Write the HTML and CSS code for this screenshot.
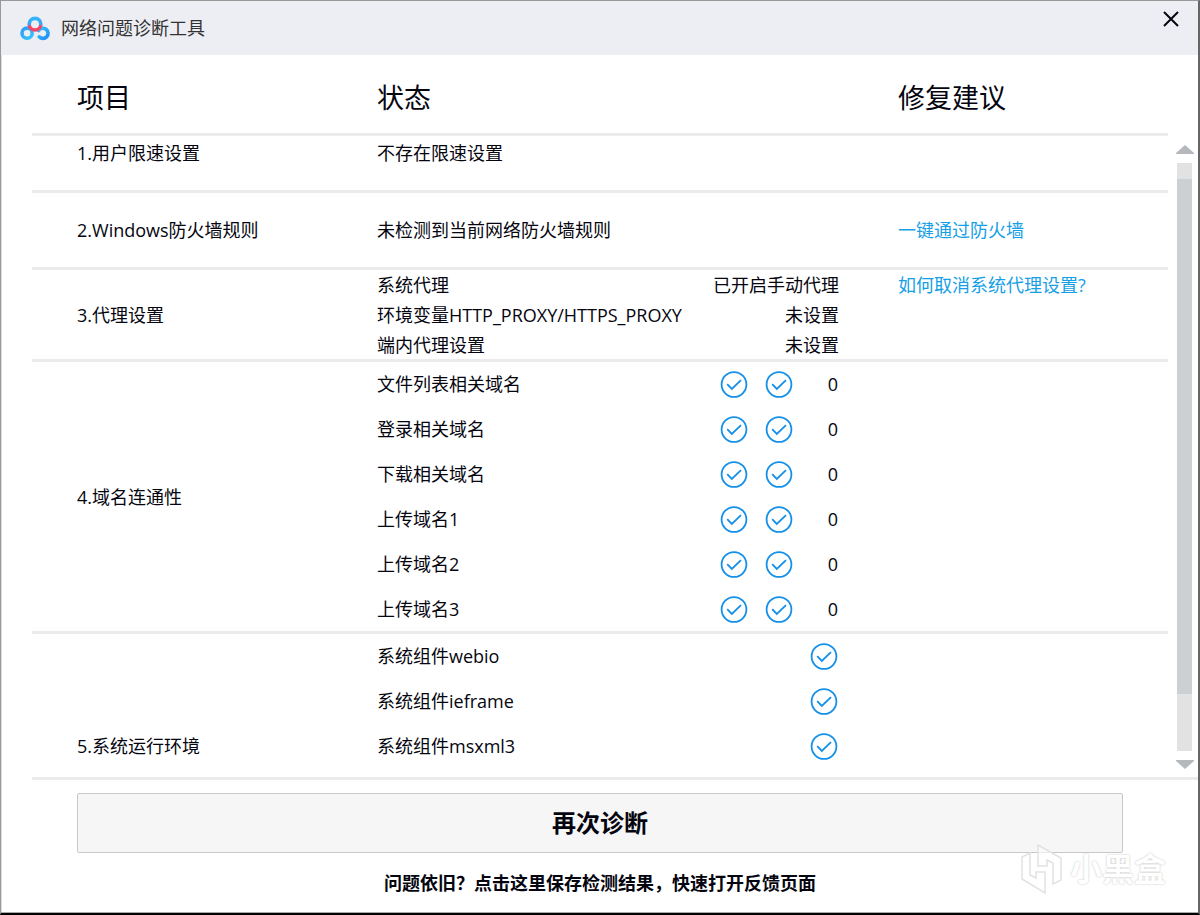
FILE: index.html
```html
<!DOCTYPE html>
<html lang="zh-CN">
<head>
<meta charset="utf-8">
<title>网络问题诊断工具</title>
<link rel="stylesheet" href="styles.css">
</head>
<body>
<svg class="sprite" aria-hidden="true">
  <symbol id="ok" viewBox="0 0 28 28"><circle cx="14" cy="13.5" r="12.4"/><path d="M7.2 13.1l4.6 4.8 9.2-8.8"/></symbol>
</svg>
<div class="window">
  <header class="titlebar">
    <svg class="logo" viewBox="0 0 30 26" aria-hidden="true">
      <defs>
        <linearGradient id="ring" x1="0" y1="0" x2="1" y2="1"><stop offset="0" stop-color="#2f9df6"/><stop offset="1" stop-color="#35c6fb"/></linearGradient>
        <linearGradient id="hook" x1="0" y1="0" x2="1" y2="1"><stop offset="0" stop-color="#35c6fb"/><stop offset="1" stop-color="#1f8df5"/></linearGradient>
        <linearGradient id="top" x1="0" y1="0" x2="0" y2="1"><stop offset="0" stop-color="#35b4fa"/><stop offset="0.5" stop-color="#3aa6f6"/><stop offset="0.68" stop-color="#f0476a"/><stop offset="1" stop-color="#f0476a"/></linearGradient>
      </defs>
      <circle cx="7.1" cy="18.2" r="5.1" stroke="url(#ring)"/>
      <path d="M18.6 15.6A5.1 5.1 0 1 1 19.2 21.8" stroke="url(#hook)" stroke-linecap="round"/>
      <circle cx="15" cy="9.2" r="5.8" stroke="url(#top)"/>
    </svg>
    <h1 class="title">网络问题诊断工具</h1>
    <button class="close" type="button" aria-label="关闭"><svg viewBox="0 0 16 16"><path d="M1 1l14 14M15 1L1 15"/></svg></button>
  </header>
  <main class="content">
    <table class="results">
      <colgroup><col class="col-item"><col class="col-status"><col></colgroup>
      <thead><tr><th scope="col">项目</th><th scope="col">状态</th><th scope="col">修复建议</th></tr></thead>
      <tbody>
        <tr class="row-speed"><td>1.用户限速设置</td><td>不存在限速设置</td><td></td></tr>
        <tr class="row-firewall"><td>2.Windows防火墙规则</td><td>未检测到当前网络防火墙规则</td><td><a href="#firewall">一键通过防火墙</a></td></tr>
        <tr class="row-proxy"><td>3.代理设置</td>
          <td><ul class="checks compact">
            <li><span class="name">系统代理</span><span>已开启手动代理</span></li>
            <li><span class="name">环境变量HTTP_PROXY/HTTPS_PROXY</span><span>未设置</span></li>
            <li><span class="name">端内代理设置</span><span>未设置</span></li>
          </ul></td>
          <td class="top"><a href="#proxy">如何取消系统代理设置?</a></td></tr>
        <tr class="row-domain"><td>4.域名连通性</td>
          <td><ul class="checks">
            <li><span class="name">文件列表相关域名</span><svg class="ok"><use href="#ok"/></svg><svg class="ok"><use href="#ok"/></svg><span class="count">0</span></li>
            <li><span class="name">登录相关域名</span><svg class="ok"><use href="#ok"/></svg><svg class="ok"><use href="#ok"/></svg><span class="count">0</span></li>
            <li><span class="name">下载相关域名</span><svg class="ok"><use href="#ok"/></svg><svg class="ok"><use href="#ok"/></svg><span class="count">0</span></li>
            <li><span class="name">上传域名1</span><svg class="ok"><use href="#ok"/></svg><svg class="ok"><use href="#ok"/></svg><span class="count">0</span></li>
            <li><span class="name">上传域名2</span><svg class="ok"><use href="#ok"/></svg><svg class="ok"><use href="#ok"/></svg><span class="count">0</span></li>
            <li><span class="name">上传域名3</span><svg class="ok"><use href="#ok"/></svg><svg class="ok"><use href="#ok"/></svg><span class="count">0</span></li>
          </ul></td><td></td></tr>
        <tr class="row-system"><td>5.系统运行环境</td>
          <td><ul class="checks">
            <li><span class="name">系统组件webio</span><svg class="ok"><use href="#ok"/></svg></li>
            <li><span class="name">系统组件ieframe</span><svg class="ok"><use href="#ok"/></svg></li>
            <li><span class="name">系统组件msxml3</span><svg class="ok"><use href="#ok"/></svg></li>
          </ul></td><td></td></tr>
      </tbody>
    </table>
    <div class="scrollbar" aria-hidden="true">
      <svg class="arrow" viewBox="0 0 18 9"><path d="M0 9v-1L9 0l9 8v1z"/></svg>
      <div class="track"><div class="thumb"></div></div>
      <svg class="arrow" viewBox="0 0 18 9"><path d="M0 0v1l9 8 9-8V0z"/></svg>
    </div>
  </main>
  <footer class="footer">
    <button class="again" type="button">再次诊断</button>
    <a class="feedback" href="#feedback">问题依旧？点击这里保存检测结果，快速打开反馈页面</a>
  </footer>
  <div class="watermark">
    <svg viewBox="0 0 42 50" aria-hidden="true"><path d="M1 13l8-4v22l6 3v-6h9v21L1 35zM17 1l23 13v22l-8 4V19l-6-3v6h-9z"/></svg>
    <span>小黑盒</span>
  </div>
</div>
</body>
</html>
```
FILE: styles.css
```css
* { box-sizing: border-box; }

body {
  margin: 0;
  font: 18px/30px "Open Sans", "Noto Sans CJK SC", sans-serif;
  color: #05050f;
  background: #fff;
}

.sprite { position: absolute; width: 0; height: 0; }

.window {
  position: relative;
  display: flex;
  flex-direction: column;
  min-height: 100vh;
  border: 1px solid #999;
  border-right: 2px solid #666;
  border-bottom: 2px solid #000;
  box-shadow: inset 0 -1px #aaa, inset 1px 0 #ddd;
}

.titlebar {
  display: flex;
  align-items: center;
  gap: 11px;
  height: 54px;
  padding: 0 19px 0 19px;
  background: #edeef4;
}
.logo { width: 30px; height: 26px; fill: none; stroke-width: 3.6; }
.title { flex: 1; margin: 0; font-size: 18px; font-weight: 400; color: #333; }
.close { align-self: flex-start; margin-top: 10px; padding: 0; border: 0; background: none; cursor: pointer; }
.close svg { display: block; width: 16px; height: 16px; stroke: #05050f; stroke-width: 2; }

.content { display: flex; gap: 8px; padding: 0 5px 0 31px; }
.results { flex: 1; table-layout: fixed; border-spacing: 0; }
.col-item { width: 345px; }
.col-status { width: 521px; }
th, td { padding: 0; text-align: left; border-bottom: 3px solid #ebebeb; }
th:first-child, td:first-child { padding-left: 45px; }
th { height: 81px; padding-top: 8px; font-size: 27px; font-weight: 400; line-height: 36px; }
.row-speed td { height: 57px; padding-top: 2px; vertical-align: top; }
.row-firewall td { height: 77px; }
.row-proxy td { height: 92px; }
.row-proxy .top { vertical-align: top; }
.row-system td { border: 0; padding-bottom: 8px; vertical-align: bottom; line-height: 45px; }
a { color: #169fe6; text-decoration: none; }

.checks { margin: 0 0 -1px; padding: 0 60px 0 0; list-style: none; line-height: 45px; }
.row-system .checks { margin: 0; }
.compact { padding-right: 59px; line-height: 30px; }
.checks li { display: flex; align-items: center; gap: 17px; }
.name { flex: 1; white-space: nowrap; }
.ok { width: 28px; height: 28px; fill: none; stroke: #1490e8; stroke-width: 1.8; }
.count { width: 28px; text-align: right; }

.scrollbar { display: flex; flex-direction: column; align-items: center; gap: 9px; width: 17px; padding: 90px 0 8px; }
.arrow { display: block; width: 18px; height: 9px; fill: #b5b9bd; }
.track { flex: 1; width: 15px; padding-top: 16px; background: #e2e2e2; }
.thumb { height: 90%; background: #cdd0d2; }

.footer {
  display: flex;
  flex-direction: column;
  align-items: center;
  gap: 15px;
  margin-left: 31px;
  padding: 13px 75px 15px 45px;
  border-top: 3px solid #ebebeb;
}
.again {
  width: 100%;
  height: 60px;
  border: 1px solid #c8c8c8;
  border-radius: 2px;
  background: #f6f6f6;
  color: inherit;
  font: bold 24px/36px "Open Sans", "Noto Sans CJK SC", sans-serif;
  cursor: pointer;
}
.feedback { color: inherit; font-weight: 700; }

.watermark {
  position: absolute;
  right: 32px;
  bottom: 19px;
  display: flex;
  align-items: center;
  gap: 7px;
  color: #fff;
  font-size: 32px;
  font-weight: 700;
  line-height: 50px;
  text-shadow: 0 0 2px #bbb;
}
.watermark svg { width: 42px; height: 50px; fill: #fff; fill-opacity: 0.6; stroke: #e2e2e2; stroke-width: 1.5; }
```
